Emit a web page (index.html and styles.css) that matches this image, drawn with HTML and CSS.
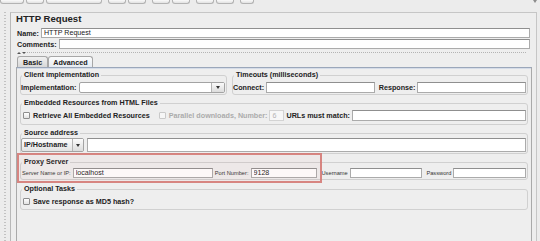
FILE: index.html
```html
<!DOCTYPE html>
<html lang="en">
<head>
    <meta charset="UTF-8">
    <meta name="viewport" content="width=device-width, initial-scale=1.0">
    <title>HTTP Request</title>
    <link rel="stylesheet" href="styles.css">
</head>
<body>
    <!-- Toolbar (only the bottom edge of the buttons is visible) -->
    <div class="toolbar">
        <span class="tb-btn tb-wide"></span>
        <span class="tb-btn"></span>
        <span class="tb-btn tb-long"></span>
        <span class="tb-btn tb-group"></span>
        <span class="tb-btn"></span>
        <span class="tb-btn tb-group"></span>
        <span class="tb-btn"></span>
        <span class="tb-btn tb-group"></span>
        <span class="tb-btn"></span>
        <span class="tb-btn tb-group tb-small"></span>
        <span class="tb-corner"></span>
    </div>

    <div class="window">
        <div class="sash"></div>

        <div class="sampler">
            <h1 class="title">HTTP Request</h1>
            <div class="field-row name-row">
                <label class="label">Name:</label>
                <input class="text" type="text" value="HTTP Request">
            </div>
            <div class="field-row comments-row">
                <label class="label">Comments:</label>
                <input class="text" type="text">
            </div>

            <div class="splitter">
                <span class="arrows"><i class="up"></i><i class="down"></i></span>
                <span class="grip"></span>
            </div>

            <div class="tabs">
                <span class="tab">Basic</span>
                <span class="tab active">Advanced</span>
            </div>

            <div class="tab-panel">
                <div class="split">
                    <fieldset class="box client">
                        <legend>Client implementation</legend>
                        <div class="fs-row">
                            <label class="label">Implementation:</label>
                            <div class="combo">
                                <span class="combo-value"></span>
                                <span class="combo-arrow"></span>
                            </div>
                        </div>
                    </fieldset>
                    <fieldset class="box timeouts">
                        <legend>Timeouts (milliseconds)</legend>
                        <div class="fs-row">
                            <label class="label">Connect:</label>
                            <input class="text" type="text">
                            <label class="label spaced">Response:</label>
                            <input class="text" type="text">
                        </div>
                    </fieldset>
                </div>

                <fieldset class="box embedded">
                    <legend>Embedded Resources from HTML Files</legend>
                    <div class="fs-row">
                        <span class="check"></span>
                        <label class="label">Retrieve All Embedded Resources</label>
                        <span class="check disabled"></span>
                        <label class="label muted">Parallel downloads, Number:</label>
                        <input class="text tiny" type="text" value="6" disabled>
                        <label class="label">URLs must match:</label>
                        <input class="text" type="text">
                    </div>
                </fieldset>

                <fieldset class="box source">
                    <legend>Source address</legend>
                    <div class="fs-row tall">
                        <div class="combo ip">
                            <span class="combo-value">IP/Hostname</span>
                            <span class="combo-arrow"></span>
                        </div>
                        <input class="text" type="text">
                    </div>
                </fieldset>

                <fieldset class="box proxy">
                    <legend>Proxy Server</legend>
                    <div class="fs-row">
                        <label class="small">Server Name or IP:</label>
                        <input class="text host" type="text" value="localhost">
                        <label class="small">Port Number:</label>
                        <input class="text port" type="text" value="9128">
                        <label class="small user">Username</label>
                        <input class="text" type="text">
                        <label class="small pass">Password</label>
                        <input class="text" type="text">
                    </div>
                </fieldset>

                <fieldset class="box optional">
                    <legend>Optional Tasks</legend>
                    <div class="fs-row">
                        <span class="check"></span>
                        <label class="label">Save response as MD5 hash?</label>
                    </div>
                </fieldset>
            </div>
        </div>

        <div class="edge"></div>
    </div>

    <!-- red highlight drawn over the proxy settings -->
    <div class="annotation"></div>
</body>
</html>
```

FILE: styles.css
```css
body {
    margin: 0;
    width: 540px;
    height: 241px;
    overflow: hidden;
    background: #ececec;
    font-family: 'Liberation Sans', Arial, sans-serif;
    font-size: 7.2px;
    color: #1e1e1e;
    position: relative;
}

/* Toolbar */
.toolbar {
    display: flex;
    gap: 2px;
    height: 5px;
    margin-bottom: 7px;
}
.tb-btn {
    width: 18px;
    height: 4px;
    box-sizing: border-box;
    border: 1px solid #b3b3b3;
    border-top: none;
    border-radius: 0 0 3px 3px;
    background: linear-gradient(#fafafa, #e2e2e2);
}
.tb-wide { width: 24px; }
.tb-long { width: 56px; }
.tb-small { width: 14px; }
.tb-group { margin-left: 4px; }
.tb-corner {
    margin-left: auto;
    margin-right: 3px;
    width: 0;
    height: 0;
    border-left: 2px solid transparent;
    border-right: 2px solid transparent;
    border-top: 3px solid #8c8c8c;
}

/* Window frame */
.window {
    display: flex;
    height: 229px;
}
.sash {
    width: 10px;
    flex: none;
    background: repeating-linear-gradient(to bottom, #c2c2c2 0 1px, transparent 1px 3px) no-repeat 4px 0 / 2px 100%;
}
.sampler {
    flex: 1;
    min-width: 0;
    display: flex;
    flex-direction: column;
    border-top: 1px solid #c6c6c6;
    border-left: 1px solid #b8b8b8;
    border-right: 1px solid #c6c6c6;
    background: #eeeeee;
}
.edge {
    width: 3px;
    flex: none;
}

.title {
    margin: 0;
    padding-left: 5px;
    font-size: 9.6px;
    line-height: 11px;
    font-weight: bold;
    color: #222;
}

.field-row {
    display: flex;
    align-items: center;
    gap: 2px;
    height: 10px;
    padding: 0 6px 0 6px;
}
.name-row { margin-top: 4px; }
.comments-row { margin-top: 1px; }

.label {
    font-weight: bold;
    white-space: nowrap;
    color: #222;
}
.label.muted { color: #ababab; }
.label.spaced { margin-left: 2px; }

.small {
    font-size: 5.7px;
    white-space: nowrap;
    color: #333;
}

.text {
    flex: 1;
    min-width: 0;
    width: 0;
    height: 100%;
    box-sizing: border-box;
    margin: 0;
    padding: 0 2px;
    border: 1px solid #ababab;
    border-top-color: #8f8f8f;
    background: #fff;
    font-family: 'Liberation Sans', Arial, sans-serif;
    font-size: 7.1px;
    color: #222;
    outline: none;
}
.text.tiny {
    flex: none;
    width: 15px;
    background: #f7f7f7;
    border-color: #d3d3d3;
    color: #b5b5b5;
}
.text.host { flex: none; width: 140px; }
.text.port { flex: none; width: 66px; }

/* Splitter between header and tabs */
.splitter {
    display: flex;
    align-items: center;
    height: 7px;
    margin: 0 9px 0 6px;
}
.arrows {
    display: flex;
    gap: 1px;
    width: 10px;
}
.arrows i {
    width: 0;
    height: 0;
    border-left: 2px solid transparent;
    border-right: 2px solid transparent;
}
.arrows .up { border-bottom: 2px solid #555; }
.arrows .down { border-top: 2px solid #555; }
.grip {
    flex: 1;
    height: 1px;
    background: repeating-linear-gradient(to right, #b4b4b4 0 1px, transparent 1px 2px);
}

/* Tabs */
.tabs {
    display: flex;
    height: 11px;
    margin-left: 6px;
    position: relative;
    z-index: 1;
}
.tab {
    padding: 0 5px;
    border: 1px solid #a7a7a7;
    border-bottom: none;
    border-radius: 3px 3px 0 0;
    background: linear-gradient(#f0f0f0, #d8d8d8);
    font-weight: bold;
    line-height: 11px;
    color: #222;
}
.tab.active {
    padding: 0 4px;
    background: linear-gradient(#fcfcfc, #e6ebf2);
}

.tab-panel {
    flex: 1;
    min-width: 0;
    display: flex;
    flex-direction: column;
    gap: 4px;
    margin: 0 4px 0 5px;
    padding: 3px 3px 0 3px;
    border: 1px solid #aaaaaa;
    border-top-color: #9ba7ba;
    border-bottom: none;
    box-shadow: inset 0 1px 0 #d5dce8;
}

.split {
    display: flex;
    gap: 5px;
}

/* Titled borders */
.box {
    margin: 0;
    padding: 3px 1px 2px 0;
    min-width: 0;
    border: 1px solid #d0d0d0;
    border-radius: 3px;
}
.box legend {
    padding: 0 2px;
    margin-left: 1px;
    font-weight: bold;
    line-height: 8px;
    color: #222;
}
.client { width: 207px; flex: none; box-sizing: border-box; padding-bottom: 1px; }
.timeouts { flex: 1; padding-bottom: 1px; }
.embedded { padding-top: 3px; padding-bottom: 3px; }
.source { padding-top: 1px; padding-bottom: 1px; }
.proxy { padding-top: 2px; padding-bottom: 1px; }
.optional { margin-top: 1px; }

.fs-row {
    display: flex;
    align-items: center;
    gap: 2px;
    height: 11px;
}
.fs-row.tall { height: 14px; gap: 3px; }
.proxy .fs-row { height: 10px; padding-left: 1px; }

.check {
    flex: none;
    width: 7px;
    height: 7px;
    box-sizing: border-box;
    margin: 0 1px 0 2px;
    border: 1px solid #8e8e8e;
    border-radius: 1px;
    background: linear-gradient(#ffffff, #e2e2e2);
}
.check.disabled {
    margin-left: 7px;
    border-color: #c9c9c9;
    background: #f6f6f6;
}

/* Combo boxes */
.combo {
    flex: 1;
    display: flex;
    height: 100%;
    box-sizing: border-box;
    border: 1px solid #a3a3a3;
    border-radius: 2px;
    background: #fff;
}
.combo-value {
    flex: 1;
    padding-left: 2px;
    font-weight: bold;
    line-height: 12px;
    white-space: nowrap;
}
.combo-arrow {
    width: 12px;
    display: flex;
    align-items: center;
    justify-content: center;
    border-left: 1px solid #b4b4b4;
    background: linear-gradient(#fbfbfb, #dcdcdc);
}
.combo-arrow::after {
    content: "";
    border-left: 2.5px solid transparent;
    border-right: 2.5px solid transparent;
    border-top: 3px solid #333;
}
.combo.ip {
    flex: none;
    width: 63px;
    background: linear-gradient(#fdfdfd, #e3e3e3);
}
.combo.ip .combo-arrow { width: 10px; }

.small.user { margin-left: 3px; }
.small.pass { margin-left: 2px; }

.annotation {
    position: absolute;
    left: 17px;
    top: 153px;
    width: 305px;
    height: 30px;
    box-sizing: border-box;
    border: 2px solid rgba(212, 122, 118, 0.9);
    background: rgba(220, 140, 140, 0.06);
    pointer-events: none;
}
```
